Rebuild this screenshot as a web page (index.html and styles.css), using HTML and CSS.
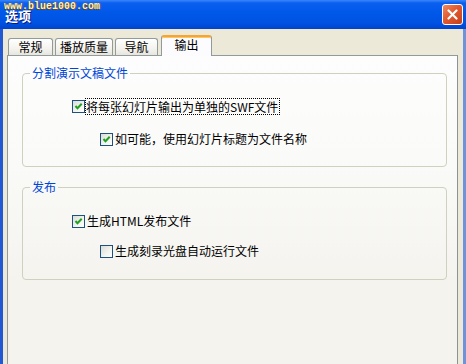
FILE: index.html
```html
<!DOCTYPE html>
<html lang="zh-CN">
<head>
  <meta charset="UTF-8">
  <title>选项</title>
  <link rel="stylesheet" href="styles.css">
</head>
<body>
  <div class="window">
    <div class="titlebar">
      <span class="title">选项</span>
      <span class="watermark">www.blue1000.com</span>
      <button class="close" type="button">
        <svg width="11" height="11" viewBox="0 0 11 11">
          <path d="M1.5 1.5 L9.5 9.5 M9.5 1.5 L1.5 9.5" stroke="#fff" stroke-width="2.2" stroke-linecap="round"/>
        </svg>
      </button>
    </div>

    <div class="client">
      <div class="tabs">
        <div class="tab tab-general">常规</div>
        <div class="tab tab-quality">播放质量</div>
        <div class="tab tab-nav">导航</div>
        <div class="tab tab-output active">输出</div>
      </div>

      <div class="panel">
        <fieldset class="group group-split">
          <legend>分割演示文稿文件</legend>
          <label class="check-row">
            <span class="box"><svg width="11" height="11" viewBox="0 0 11 11"><path d="M2.5 5 L4.5 7.3 L8.7 2.8" fill="none" stroke="#21a121" stroke-width="2"/></svg></span>
            <span class="caption focus">将每张幻灯片输出为单独的SWF文件</span>
          </label>
          <label class="check-row sub">
            <span class="box"><svg width="11" height="11" viewBox="0 0 11 11"><path d="M2.5 5 L4.5 7.3 L8.7 2.8" fill="none" stroke="#21a121" stroke-width="2"/></svg></span>
            <span class="caption">如可能，使用幻灯片标题为文件名称</span>
          </label>
        </fieldset>

        <fieldset class="group group-publish">
          <legend>发布</legend>
          <label class="check-row">
            <span class="box"><svg width="11" height="11" viewBox="0 0 11 11"><path d="M2.5 5 L4.5 7.3 L8.7 2.8" fill="none" stroke="#21a121" stroke-width="2"/></svg></span>
            <span class="caption">生成HTML发布文件</span>
          </label>
          <label class="check-row sub">
            <span class="box"></span>
            <span class="caption">生成刻录光盘自动运行文件</span>
          </label>
        </fieldset>
      </div>
    </div>
  </div>
</body>
</html>
```

FILE: styles.css
```css
body {
  margin: 0;
  overflow: hidden;
  font-family: "Noto Sans CJK SC", "Liberation Sans", sans-serif;
  font-size: 12px;
  line-height: 14px;
  color: #000;
}
.window {
  width: 466px;
  height: 364px;
  display: flex;
  flex-direction: column;
  overflow: hidden;
}
.titlebar {
  position: relative;
  height: 29px;
  flex: none;
  display: flex;
  align-items: center;
  padding: 2px 3px 0 5px;
  box-sizing: border-box;
  background: linear-gradient(to bottom, #3b86f7 0, #0a5ff0 3px, #0058e8 45%, #0052e2 80%, #0043cf 100%);
}
.title {
  flex: 1;
  color: #fff;
  font-weight: bold;
  font-size: 13px;
  text-shadow: 1px 1px 0 #0a1a80;
}
.watermark {
  position: absolute;
  left: 4px;
  top: 1px;
  font-family: "Liberation Mono", monospace;
  font-weight: bold;
  font-size: 10px;
  line-height: 11px;
  color: #fff3c4;
  text-shadow: 1px 0 0 #6a4a20, 0 1px 0 #6a4a20;
}
.close {
  width: 21px;
  height: 21px;
  padding: 0;
  margin-top: -2px;
  border: 1px solid #fff;
  border-radius: 3px;
  background: linear-gradient(135deg, #f08a60 0, #e2592f 45%, #c3401b 100%);
  display: flex;
  align-items: center;
  justify-content: center;
}
.client {
  flex: 1;
  display: flex;
  flex-direction: column;
  background: #ece9d8;
  border-left: 3px solid #2259d2;
  border-right: 3px solid #6f93d8;
  padding: 0 5px 0 4px;
}
.tabs {
  height: 21px;
  margin-top: 6px;
  display: flex;
  align-items: flex-end;
  gap: 2px;
  padding-left: 1px;
}
.tab {
  height: 17px;
  margin-bottom: 1px;
  box-sizing: border-box;
  border: 1px solid #919b9c;
  border-bottom: none;
  border-radius: 3px 3px 0 0;
  background: linear-gradient(to bottom, #fff 0, #f4f3ee 60%, #e6e5de 100%);
  display: flex;
  justify-content: center;
  align-items: center;
}
.tab-general { width: 45px; }
.tab-quality { width: 58px; }
.tab-nav { width: 43px; }
.tab-output { width: 51px; margin-left: 1px; }
.tab.active {
  position: relative;
  z-index: 1;
  height: 21px;
  margin-bottom: 0;
  padding-bottom: 3px;
  background: #fcfcfe;
  border-top: 2px solid #f3a53c;
  box-shadow: inset 0 1px 0 #ffc75a;
}
.panel {
  flex: 1;
  margin-top: -1px;
  border: 1px solid #919b9c;
  border-bottom: none;
  border-right-color: #8a9498;
  background: linear-gradient(to bottom, #fdfdfd 0, #fafaf8 35%, #f4f3ee 75%, #f4f3ee 100%);
}
.group {
  margin: 10px 10px 0 14px;
  padding: 0 0 19px;
  border: 1px solid #d0d0bf;
  border-radius: 4px;
  min-width: 0;
}
.group + .group {
  margin-top: 13px;
  padding-bottom: 20px;
}
.group legend {
  margin-left: 7px;
  padding: 0 2px;
  color: #0046d5;
  line-height: 14px;
}
.check-row {
  display: flex;
  align-items: center;
  height: 16px;
  padding-left: 49px;
  margin-top: 17px;
}
.group-split .check-row:first-of-type { margin-top: 18px; }
.group-publish .check-row:first-of-type { margin-top: 19px; }
.group-publish .check-row.sub { margin-top: 14px; }
.check-row.sub {
  padding-left: 77px;
}
.box {
  width: 13px;
  height: 13px;
  box-sizing: border-box;
  border: 1px solid #1c5180;
  background: linear-gradient(135deg, #dcdcd7 0, #f4f4f0 60%, #fff 100%);
  margin-right: 2px;
  flex: none;
}
.box svg {
  display: block;
}
.caption {
  white-space: nowrap;
}
.focus {
  outline: 1px dotted #000;
  outline-offset: 0;
  padding: 1px 1px 0 0;
  margin-left: -1px;
}
```
